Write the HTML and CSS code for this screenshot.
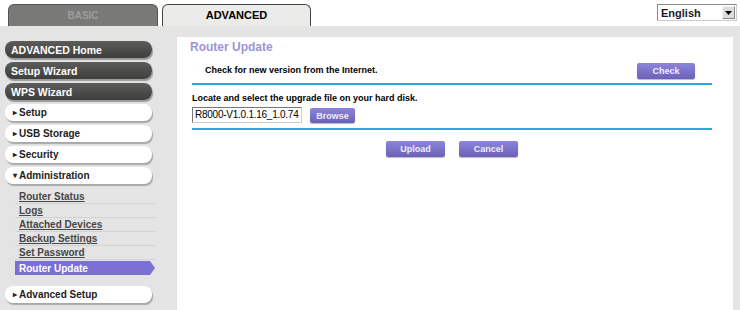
FILE: index.html
```html
<!DOCTYPE html>
<html>
<head>
<meta charset="utf-8">
<link rel="stylesheet" href="styles.css">
</head>
<body>
<div class="top">
  <div class="tab tab-basic">BASIC</div>
  <div class="tab tab-adv">ADVANCED</div>
  <div class="lang"><span class="lang-text">English</span><span class="lang-arrow"><svg width="7" height="4" viewBox="0 0 7 4"><path d="M0 0H7L3.5 4Z" fill="#000"/></svg></span></div>
</div>
<div class="main">
  <div class="side">
    <div class="btn dark">ADVANCED Home</div>
    <div class="btn dark">Setup Wizard</div>
    <div class="btn dark">WPS Wizard</div>
    <div class="btn light"><span class="tri">&#9656;</span>Setup</div>
    <div class="btn light"><span class="tri">&#9656;</span>USB Storage</div>
    <div class="btn light"><span class="tri">&#9656;</span>Security</div>
    <div class="btn light"><span class="tri">&#9662;</span>Administration</div>
    <div class="sub">
      <div class="link"><span>Router Status</span></div>
      <div class="link"><span>Logs</span></div>
      <div class="link"><span>Attached Devices</span></div>
      <div class="link"><span>Backup Settings</span></div>
      <div class="link"><span>Set Password</span></div>
      <div class="link active"><span>Router Update</span></div>
    </div>
    <div class="btn light"><span class="tri">&#9656;</span>Advanced Setup</div>
  </div>
  <div class="content">
    <div class="title">Router Update</div>
    <div class="inner">
      <div class="check-row">
        <span class="label">Check for new version from the Internet.</span>
        <span class="pbtn check">Check</span>
      </div>
      <div class="rule"></div>
      <div class="locate">Locate and select the upgrade file on your hard disk.</div>
      <div class="file-row">
        <span class="file">R8000-V1.0.1.16_1.0.74</span>
        <span class="pbtn browse">Browse</span>
      </div>
      <div class="rule"></div>
      <div class="actions">
        <span class="pbtn act">Upload</span>
        <span class="pbtn act">Cancel</span>
      </div>
    </div>
  </div>
</div>
</body>
</html>
```
FILE: styles.css
```css
* { box-sizing: border-box; }
html, body { margin: 0; padding: 0; }
body {
  width: 740px;
  height: 310px;
  overflow: hidden;
  background: #fff;
  font-family: "Liberation Sans", Arial, sans-serif;
  font-size: 9px;
  font-weight: bold;
}
.top {
  height: 26px;
  display: flex;
  align-items: flex-start;
  padding-left: 8px;
  padding-top: 4px;
  background: #fff;
}
.tab {
  height: 22px;
  border: 1px solid #555;
  border-bottom: none;
  border-radius: 6px 6px 0 0;
  display: flex;
  align-items: center;
  justify-content: center;
  font-weight: bold;
  padding-bottom: 1px;
}
.tab-basic {
  width: 150px;
  background: #797977;
  color: #9e9e9c;
  font-size: 10px;
}
.tab-adv {
  width: 149px;
  margin-left: 4px;
  background: #ebebe9;
  color: #000;
  border-color: #444;
  font-size: 11px;
}
.lang {
  margin-left: auto;
  margin-right: 3px;
  width: 80px;
  height: 17px;
  border: 1px solid #8a8a8a;
  border-right-color: #ccc;
  border-bottom-color: #ccc;
  display: flex;
  align-items: center;
  background: #fff;
}
.lang-text {
  flex: 1;
  padding-left: 3px;
  font-size: 11px;
  font-weight: bold;
  color: #1a1a2a;
}
.lang-arrow {
  width: 13px;
  height: 13px;
  margin-right: 1px;
  background: #dcdcdc;
  border: 1px solid #888;
  border-top-color: #f4f4f4;
  border-left-color: #f4f4f4;
  display: flex;
  align-items: center;
  justify-content: center;
}
.main {
  display: flex;
  height: 284px;
  background: #e4e4e4;
}
.side {
  width: 177px;
  padding-top: 15px;
  padding-left: 5px;
}
.btn {
  width: 147px;
  height: 17px;
  margin-bottom: 4px;
  border-radius: 8px;
  display: flex;
  align-items: center;
  font-weight: bold;
}
.dark {
  background: linear-gradient(#5c5c5a, #3e3e3c);
  color: #fff;
  padding-left: 6px;
  font-size: 10.5px;
  box-shadow: 1px 2px 1px #9a9a9a;
}
.light {
  background: #fff;
  color: #222;
  padding-left: 8px;
  font-size: 10px;
  box-shadow: 1px 2px 1px #a8a8a8;
}
.tri {
  font-size: 8px;
  margin-right: 2px;
}
.sub {
  margin-top: 6px;
  margin-left: 10px;
  width: 140px;
  margin-bottom: 11px;
  font-size: 10px;
}
.link {
  height: 14px;
  border-bottom: 1px solid #d2d2d2;
  padding-left: 4px;
  display: flex;
  align-items: center;
  color: #474747;
}
.link span { text-decoration: underline; }
.link.active {
  margin-top: 1px;
  width: 140px;
  border-bottom: none;
  background: #7b6fd3;
  color: #fff;
  clip-path: polygon(0 0, 135px 0, 140px 50%, 135px 100%, 0 100%);
}
.link.active span { text-decoration: none; }
.content {
  margin-top: 11px;
  width: 556px;
  background: #fff;
}
.title {
  padding-left: 13px;
  padding-top: 3px;
  height: 20px;
  font-size: 12px;
  color: #9c95d3;
}
.inner {
  margin-left: 15px;
  width: 520px;
}
.check-row {
  height: 26px;
  display: flex;
  align-items: center;
  padding-left: 13px;
}
.label { flex: 1; }
.rule {
  height: 2px;
  background: #2fa9d9;
}
.pbtn {
  display: inline-flex;
  align-items: center;
  justify-content: center;
  height: 16px;
  border-radius: 2px;
  background: linear-gradient(#8d85dc, #6b61b7);
  color: #eeeefa;
  font-size: 9px;
  font-weight: bold;
  box-shadow: 0 1px 1px #b8b8c8;
}
.check {
  width: 58px;
  margin-right: 17px;
  margin-top: 1px;
}
.locate {
  margin-top: 6px;
  height: 14px;
  display: flex;
  align-items: center;
}
.file-row {
  display: flex;
  align-items: flex-start;
  height: 23px;
  padding-top: 2px;
}
.file {
  width: 110px;
  height: 16px;
  border: 1px solid #777;
  border-right-color: #ccc;
  border-bottom-color: #ccc;
  font-size: 10px;
  letter-spacing: -0.25px;
  font-weight: normal;
  color: #000;
  padding-left: 2px;
  line-height: 14px;
  white-space: nowrap;
  overflow: hidden;
}
.browse {
  width: 45px;
  height: 15px;
  margin-left: 8px;
  margin-top: 1px;
}
.actions {
  display: flex;
  justify-content: center;
  gap: 14px;
  margin-top: 11px;
}
.act {
  width: 59px;
}
```
